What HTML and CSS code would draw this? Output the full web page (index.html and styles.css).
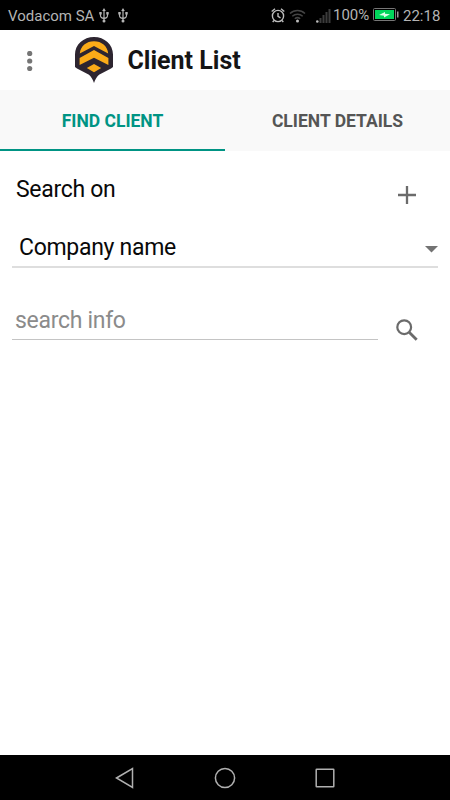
FILE: index.html
```html
<!DOCTYPE html>
<html lang="en">
<head>
<meta charset="utf-8">
<title>Client List</title>
<link rel="stylesheet" href="styles.css">
</head>
<body>
<div class="screen">
  <div class="status">
    <span class="carrier">Vodacom SA</span>
    <svg class="usb" width="10" height="15" viewBox="0 0 10 15"><g id="usb" fill="none" stroke="#b4b4b4" stroke-width="1.200"><path d="M5 2v11M1.500 5v2.500Q1.500 10 5 10.500Q8.500 10 8.500 7.500V5"/><path fill="#b4b4b4" stroke="none" d="M5 0l1.800 3H3.200zM.3 4h2.400v2.400H.3zM7.300 4h2.400v2.400H7.300z"/><circle cx="5" cy="13" r="1.500" fill="#b4b4b4" stroke="none"/></g></svg>
    <svg class="usb usb-second" width="10" height="15" viewBox="0 0 10 15"><use href="#usb"/></svg>
    <span class="fill"></span>
    <svg class="alarm" width="14" height="15" viewBox="0 0 14 15" fill="none" stroke="#bcbcbc" stroke-width="1.400"><circle cx="7" cy="8" r="5.600"/><path d="M.7 3.500L4 .8M13.300 3.500L10 .8M7 5v3.300l2.500 1.500M3 12.500l-1.300 1.500M11 12.500l1.300 1.500"/></svg>
    <svg class="wifi" width="17" height="14" viewBox="0 0 17 14" fill="none" stroke="#454545" stroke-width="1.500"><path d="M1 4.500c4.300-4 10.700-4 15 0M3.300 7.300c3-2.800 7.400-2.800 10.400 0M5.800 9.800c1.600-1.400 3.800-1.400 5.400 0"/><circle cx="8.500" cy="12" r="1.500" fill="#bcbcbc" stroke="none"/></svg>
    <svg class="signal" width="15" height="14" viewBox="0 0 15 14" fill="#3c3c3c"><path d="M3.500 9h2v5h-2zM6.500 6h2v8h-2zM9.500 3h2v11h-2zM12.500 0h2v14h-2z"/><circle cx="1.300" cy="12.500" r="1.300" fill="#bcbcbc"/></svg>
    <span class="percent">100%</span>
    <svg class="battery" width="26" height="13" viewBox="0 0 26 13"><rect x=".5" y=".5" width="22" height="12" rx="1" fill="none" stroke="#777"/><path d="M2 2h19v9H2z" fill="#00d65b"/><path d="M24 3.500h1.500v6H24z" fill="#999"/><path d="M6 7l6-3v1.800l5 .5-6 3.200V7.700z" fill="#d9ffe6"/></svg>
    <span class="clock">22:18</span>
  </div>
  <header class="appbar">
    <svg class="menu" width="6" height="20" viewBox="0 0 6 20" fill="#757575"><circle cx="2.700" cy="2.500" r="2.600"/><circle cx="2.700" cy="10" r="2.600"/><circle cx="2.700" cy="17.500" r="2.600"/></svg>
    <svg class="logo" width="38" height="46" viewBox="0 0 38 46"><path fill="#2d2530" d="M0 17.500C0 7.500 8.500 0 19 0s19 7.500 19 17.500V30l-2 1.600-12 6.200c-2.500 2-3.800 5-5 8.200-1.200-3.200-2.500-6.200-5-8.200L2 31.600 0 30z"/><g fill="#fbab18"><path d="M4.800 16.500C5.500 9 11.500 4.200 19 4.200S32.500 9 33.200 16.500L19 9z"/><path d="M4.600 21L19 13l14.400 8v7L19 20.800 4.600 28z"/><path d="M19 27l7.200 4L19 35.200 11.800 31z"/></g></svg>
    <h1 class="title">Client List</h1>
  </header>
  <nav class="tabs">
    <div class="tab tab-active">FIND CLIENT</div>
    <div class="tab">CLIENT DETAILS</div>
  </nav>
  <main class="content">
    <div class="heading-row">
      <span>Search on</span>
      <svg class="plus" width="18" height="18" viewBox="0 0 18 18"><path d="M0 9h18M9 0v18" stroke="#6b6b6b" stroke-width="2.300"/></svg>
    </div>
    <div class="select">
      <span class="selected">Company name</span>
      <svg class="caret" width="13" height="7" viewBox="0 0 13 7"><path d="M0 0h13L6.500 6.500z" fill="#737373"/></svg>
    </div>
    <div class="search-row">
      <div class="field">search info</div>
      <svg class="search" width="22" height="22" viewBox="0 0 22 22" fill="none" stroke="#6b6b6b"><circle cx="8.200" cy="8.200" r="6.900" stroke-width="2.200"/><path d="M13.200 13.200l7.500 7.500" stroke-width="2.800"/></svg>
    </div>
  </main>
  <footer class="navbar">
    <svg width="20" height="22" viewBox="0 0 20 22"><path d="M1.500 11L17.500 1.500v19z"/></svg>
    <svg width="22" height="22" viewBox="0 0 22 22"><circle cx="11" cy="11" r="9.600"/></svg>
    <svg width="20" height="20" viewBox="0 0 20 20"><rect x="1.200" y="1.200" width="17.600" height="17.600" rx=".5"/></svg>
  </footer>
</div>
</body>
</html>
```
FILE: styles.css
```css
* { box-sizing: border-box; }
body { margin: 0; font-family: Roboto, "Liberation Sans", sans-serif; background: #fff; }
svg { display: block; flex: none; }
.screen { width: 450px; height: 800px; display: flex; flex-direction: column; overflow: hidden; white-space: nowrap; }
.status { height: 30px; background: #000; color: #b4b4b4; display: flex; align-items: center; padding: 1px 10px 0 8px; font-size: 15px; }
.carrier { width: 86px; }
.usb { margin-left: 5px; }
.usb-second { margin-left: 9px; }
.fill { flex: 1; }
.wifi { margin-left: 4px; }
.signal { margin: 0 2px 0 10px; }
.percent { width: 37px; padding-bottom: 2px; }
.battery { margin: 0 4px 2px 3px; }
.clock { width: 37px; }
.appbar { height: 60px; display: flex; align-items: center; padding: 1px 0 0 27px; }
.logo { margin: 0 0 2px 42px; }
.title { margin: 0 0 0 14.500px; font-size: 25px; font-weight: 700; color: #151515; }
.tabs { height: 61px; display: flex; background: #f9f9f9; color: #555; font-size: 17.500px; font-weight: 700; }
.tab { flex: 1; display: flex; align-items: center; justify-content: center; padding-top: 2px; border-bottom: 2px solid transparent; }
.tab-active { color: #009484; border-color: #009484; }
.content { flex: 1; padding: 25px 12px 0; font-size: 23px; letter-spacing: -.3px; color: #090909; }
.heading-row { height: 51px; display: flex; justify-content: space-between; padding: 0 22px 0 4px; }
.plus { margin-top: 10px; }
.select { height: 41px; display: flex; align-items: center; justify-content: space-between; border-bottom: 2px solid #dedede; padding: 2px 0 0 7px; }
.selected { margin-bottom: 1px; }
.caret { margin-top: 3px; }
.search-row { display: flex; align-items: flex-end; margin-top: 31px; }
.field { width: 366px; height: 41px; border-bottom: 1px solid #c4c4c4; padding: 8px 0 0 3px; color: #8b8b8b; }
.search { margin: 0 0 -1px 18px; }
.navbar { height: 45px; background: #000; display: flex; align-items: center; justify-content: space-between; padding: 0 115px; }
.navbar svg { fill: none; stroke: #b0b0b0; stroke-width: 1.500; }
```
